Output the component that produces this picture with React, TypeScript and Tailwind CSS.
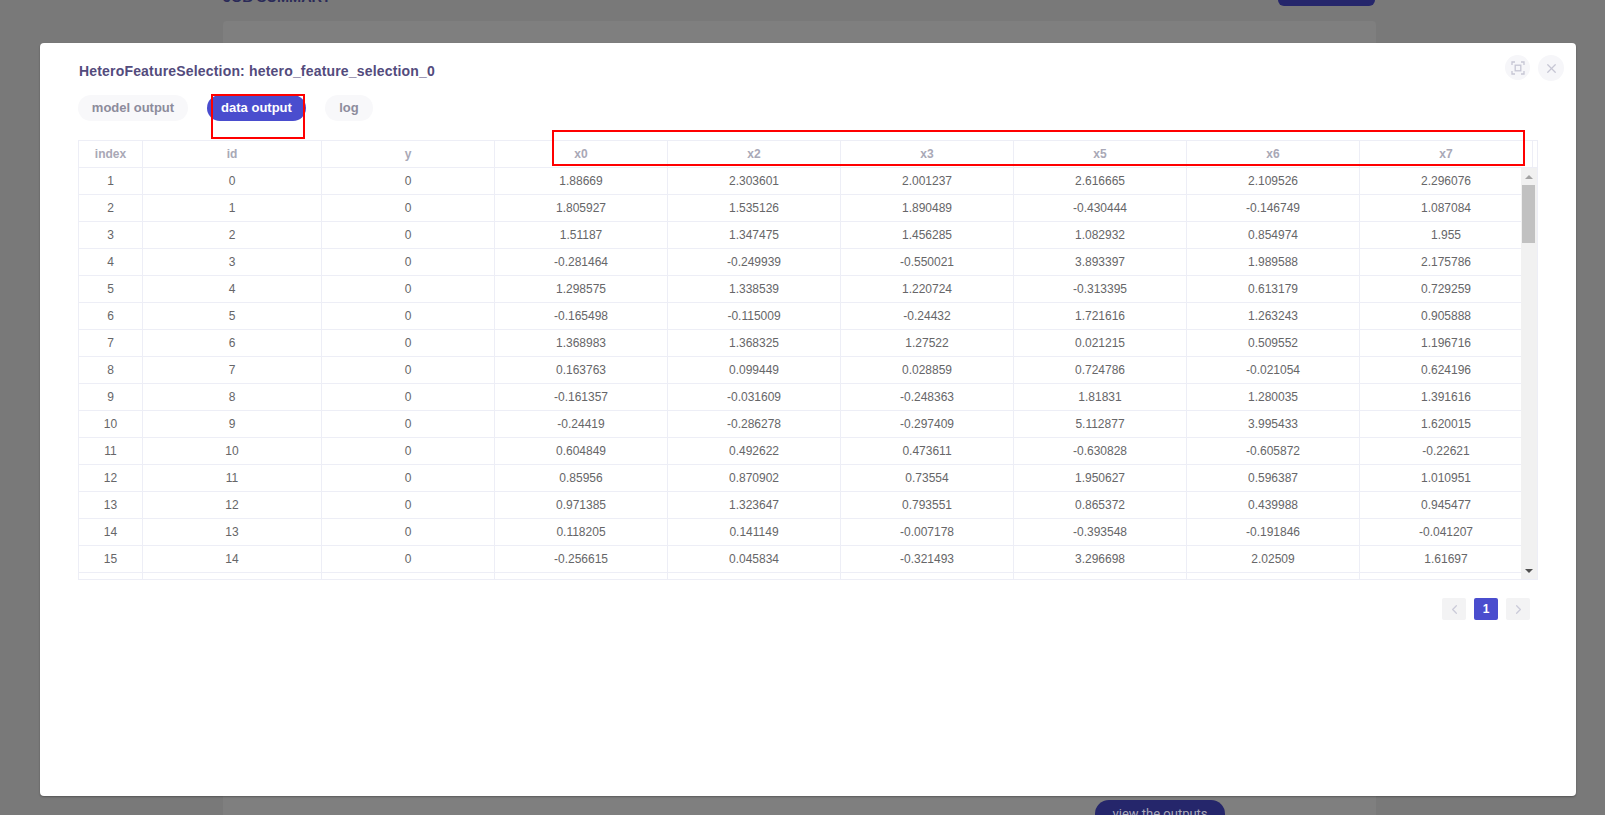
import { ChevronLeft, ChevronRight, X } from "lucide-react"

const columns = ["x0", "x2", "x3", "x5", "x6", "x7"]

const rows = [
  ["1.88669", "2.303601", "2.001237", "2.616665", "2.109526", "2.296076"],
  ["1.805927", "1.535126", "1.890489", "-0.430444", "-0.146749", "1.087084"],
  ["1.51187", "1.347475", "1.456285", "1.082932", "0.854974", "1.955"],
  ["-0.281464", "-0.249939", "-0.550021", "3.893397", "1.989588", "2.175786"],
  ["1.298575", "1.338539", "1.220724", "-0.313395", "0.613179", "0.729259"],
  ["-0.165498", "-0.115009", "-0.24432", "1.721616", "1.263243", "0.905888"],
  ["1.368983", "1.368325", "1.27522", "0.021215", "0.509552", "1.196716"],
  ["0.163763", "0.099449", "0.028859", "0.724786", "-0.021054", "0.624196"],
  ["-0.161357", "-0.031609", "-0.248363", "1.81831", "1.280035", "1.391616"],
  ["-0.24419", "-0.286278", "-0.297409", "5.112877", "3.995433", "1.620015"],
  ["0.604849", "0.492622", "0.473611", "-0.630828", "-0.605872", "-0.22621"],
  ["0.85956", "0.870902", "0.73554", "1.950627", "0.596387", "1.010951"],
  ["0.971385", "1.323647", "0.793551", "0.865372", "0.439988", "0.945477"],
  ["0.118205", "0.141149", "-0.007178", "-0.393548", "-0.191846", "-0.041207"],
  ["-0.256615", "0.045834", "-0.321493", "3.296698", "2.02509", "1.61697"],
]

const cellWidths = ["w-[64px]", "w-[179px]", "w-[173px]", "w-[173px]", "w-[173px]", "w-[173px]", "w-[173px]", "w-[173px]", "w-[173px]"]

function Row({ cells, header }: { cells: string[]; header?: boolean }) {
  return (
    <div className="flex h-[27px] shrink-0 border-b border-[#edeef6]">
      {cells.map((cell, i) => (
        <div
          key={i}
          className={`${cellWidths[i]} shrink-0 border-r border-[#edeef6] text-center text-xs leading-[26px] ${
            header ? "font-bold text-[#a9a8b6]" : "text-[#666668]"
          }`}
        >
          {cell}
        </div>
      ))}
    </div>
  )
}

function ScanIcon() {
  return (
    <svg width="14" height="14" viewBox="0 0 14 14" fill="none" stroke="#c6c6d4" strokeWidth="1.3">
      <path d="M1 4V1h3M10 1h3v3M13 10v3h-3M4 13H1v-3" />
      <rect x="4.2" y="4.2" width="5.6" height="5.6" />
    </svg>
  )
}

export default function App() {
  return (
    <div className="relative h-[815px] w-full overflow-hidden bg-[#797979] font-['Liberation_Sans',Arial,sans-serif]">
      {/* pagina dietro al modal */}
      <div className="ml-[223px] flex h-full w-[1153px] flex-col">
        <div className="flex h-[21px] shrink-0 items-start justify-between">
          <span className="-mt-[12px] text-[14.5px] font-bold leading-[18px] text-[#2a2a58]">JOB SUMMARY</span>
          <div className="mr-[1px] h-[6px] w-[97px] rounded-b-[14px] bg-[#25266b]" />
        </div>
        <div className="flex-1 rounded-t bg-[#7f7f7f] pt-[779px] pl-[872px]">
          <div className="h-[30px] w-[130px] rounded-[14px] bg-[#25266b] pt-[6px] text-center font-['Roboto',sans-serif] text-[13px] leading-4 text-[#a9a9b8]">
            view the outputs
          </div>
        </div>
      </div>

      {/* modal */}
      <div className="absolute left-[40px] top-[43px] flex h-[753px] w-[1536px] flex-col rounded bg-white pl-[38px] pt-[20px] shadow-[0_1px_2px_rgba(0,0,0,0.3)]">
        <div className="flex h-[32px] items-start justify-between">
          <h1 className="pl-[1px] text-sm font-bold leading-[16px] tracking-[0.18px] text-[#534b7d]">
            HeteroFeatureSelection: hetero_feature_selection_0
          </h1>
          <div className="mr-[12px] -mt-[8px] flex gap-[8px]">
            <button className="flex h-[25px] w-[25px] items-center justify-center rounded-full bg-[#f6f6f9]">
              <ScanIcon />
            </button>
            <button className="flex h-[26px] w-[26px] items-center justify-center rounded-full bg-[#f6f6f9]">
              <X size={15} color="#c6c6d4" strokeWidth={2} />
            </button>
          </div>
        </div>

        <div className="flex gap-[19px] text-[13px] font-bold leading-[26px]">
          <div className="h-[26px] w-[110px] rounded-[13px] bg-[#f8f8fa] text-center text-[#8d8c9c]">model output</div>
          <div className="h-[26px] w-[99px] rounded-[13px] bg-[#4a4dce] text-center text-white">data output</div>
          <div className="h-[26px] w-[48px] rounded-[13px] bg-[#f8f8fa] text-center text-[#8d8c9c]">log</div>
        </div>

        <div className="mt-[19px] flex h-[440px] w-[1460px] flex-col border border-[#edeef6]">
          <div className="flex">
            <Row cells={["index", "id", "y", ...columns]} header />
            <div className="h-[27px] flex-1 border-b border-[#edeef6]" />
          </div>
          <div className="flex min-h-0 flex-1">
            <div className="flex min-w-0 flex-1 flex-col overflow-hidden">
              {rows.map((row, i) => (
                <Row key={i} cells={[String(i + 1), String(i), "0", ...row]} />
              ))}
              <Row cells={["", "", "", "", "", "", "", "", ""]} />
            </div>
            <div className="flex w-[16px] shrink-0 flex-col bg-[#f1f1f1] pl-[1px] pr-[2px]">
              <div className="flex h-[17px] items-center justify-center">
                <div className="h-0 w-0 border-x-[4px] border-b-[4px] border-x-transparent border-b-[#a3a3a3]" />
              </div>
              <div className="h-[58px] w-full bg-[#c1c1c1]" />
              <div className="flex-1" />
              <div className="flex h-[17px] items-center justify-center">
                <div className="h-0 w-0 border-x-[4px] border-t-[4px] border-x-transparent border-t-[#505050]" />
              </div>
            </div>
          </div>
        </div>

        <div className="mt-[18px] flex w-[1452px] justify-end gap-[8px]">
          <div className="flex h-[22px] w-[24px] items-center justify-center rounded-[2px] bg-[#f3f3f4]">
            <ChevronLeft size={15} color="#cbcbd9" />
          </div>
          <div className="h-[22px] w-[24px] rounded-[2px] bg-[#4a4dce] text-center text-xs font-bold leading-[22px] text-white">1</div>
          <div className="flex h-[22px] w-[24px] items-center justify-center rounded-[2px] bg-[#f3f3f4]">
            <ChevronRight size={15} color="#cbcbd9" />
          </div>
        </div>
      </div>

      {/* riquadri rossi di annotazione */}
      <div className="absolute left-[211px] top-[94px] h-[45px] w-[94px] border-2 border-[#ff0000]" />
      <div className="absolute left-[552px] top-[130px] h-[36px] w-[973px] border-2 border-[#ff0000]" />
    </div>
  )
}
